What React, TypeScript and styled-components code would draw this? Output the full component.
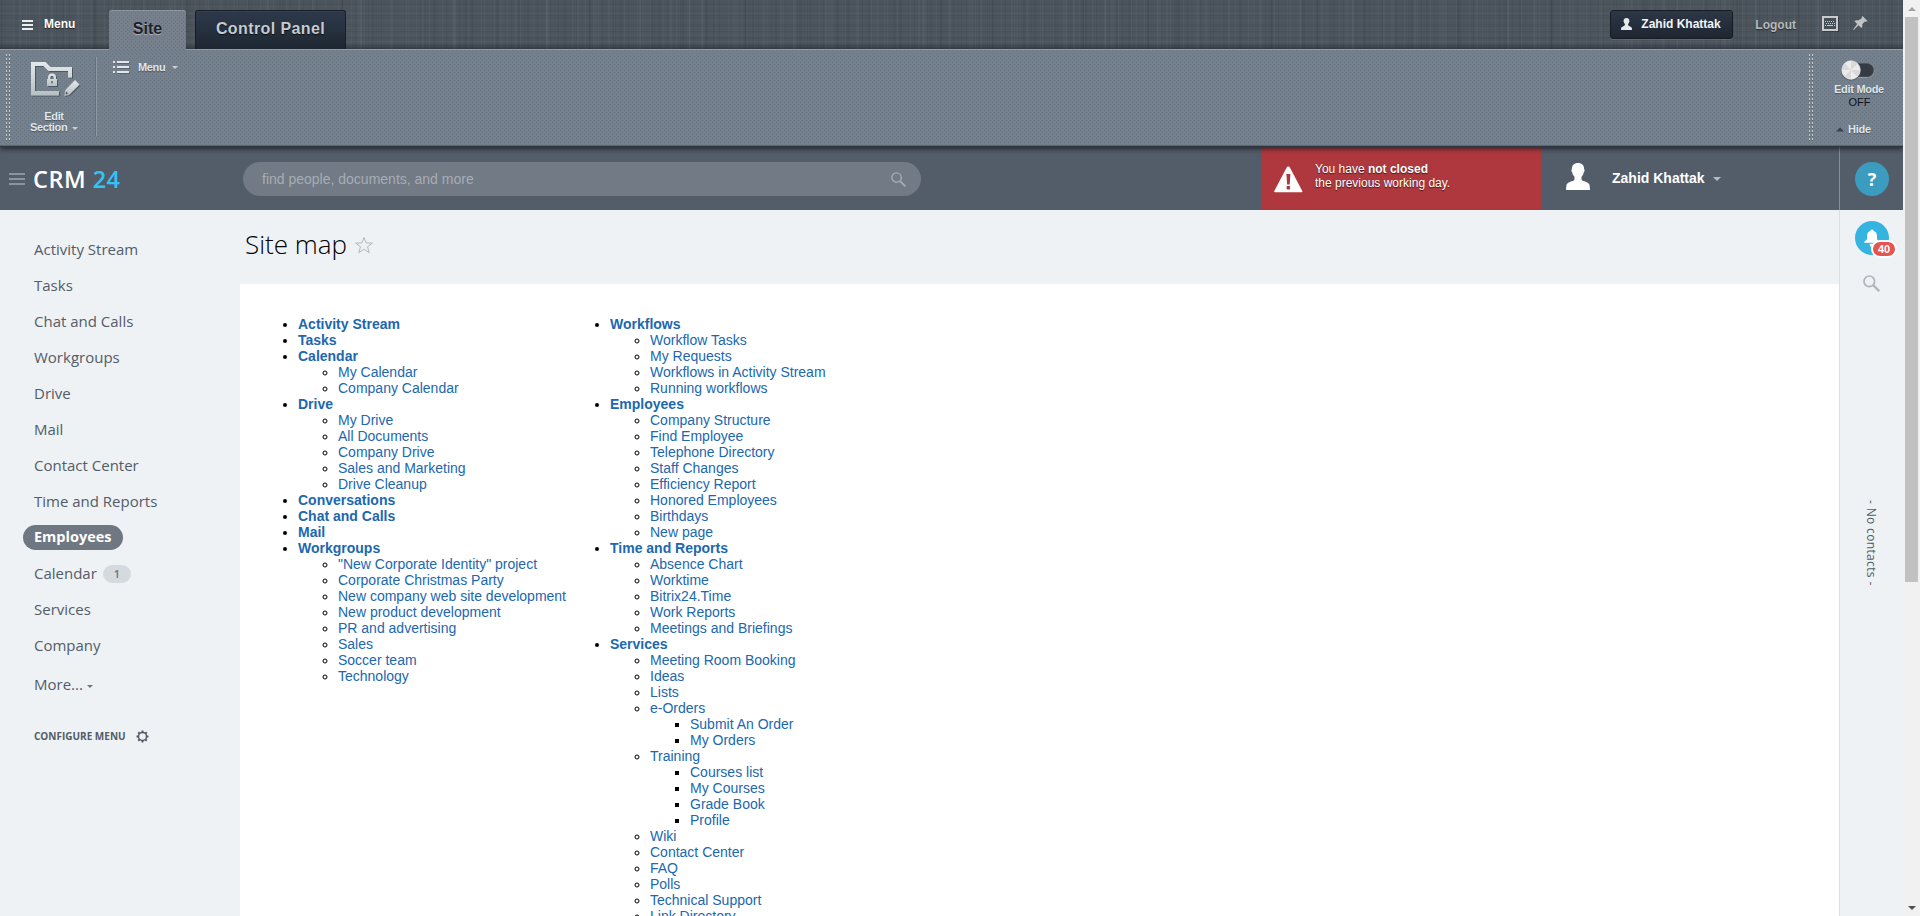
import React from "react";
import styled, { createGlobalStyle, css } from "styled-components";

const ARIAL = `"Liberation Sans", Arial, sans-serif`;
const OPEN = `"Open Sans", sans-serif`;

const GlobalStyle = createGlobalStyle`
  * { box-sizing: border-box; }
  html, body { margin: 0; padding: 0; height: 916px; overflow: hidden; background: #eef2f4; }
  body { font-family: ${ARIAL}; }
  a { text-decoration: none; color: inherit; }
  svg { display: block; flex: none; }
`;

const Page = styled.div`
  display: flex;
  width: 1920px;
  height: 916px;
  overflow: hidden;
`;

const Site = styled.div`
  width: 1903px;
  height: 916px;
  display: flex;
  flex-direction: column;
  overflow: hidden;
`;

/* ---------- admin panel ---------- */

const AdminTop = styled.div`
  height: 49px;
  flex: none;
  display: flex;
  align-items: flex-start;
  background-color: #4c545d;
  background-image:
    linear-gradient(to bottom, transparent 43px, rgba(30, 35, 42, 0.4) 49px),
    repeating-linear-gradient(90deg, rgba(255, 255, 255, 0.03) 0 1px, transparent 1px 4px, rgba(0, 0, 0, 0.05) 4px 5px, transparent 5px 13px),
    repeating-linear-gradient(90deg, rgba(0, 0, 0, 0.05) 0 2px, transparent 2px 19px, rgba(255, 255, 255, 0.03) 19px 21px, transparent 21px 31px),
    repeating-linear-gradient(90deg, rgba(0, 0, 0, 0.04) 0 3px, transparent 3px 29px, rgba(255, 255, 255, 0.02) 29px 33px, transparent 33px 47px),
    repeating-linear-gradient(0deg, rgba(255, 255, 255, 0.025) 0 1px, transparent 1px 3px, rgba(0, 0, 0, 0.05) 3px 4px, transparent 4px 7px),
    repeating-linear-gradient(0deg, rgba(0, 0, 0, 0.05) 0 1px, transparent 1px 11px);
`;

const StartMenu = styled.a`
  width: 109px;
  padding: 17px 0 0 22px;
  display: flex;
  align-items: flex-start;
  color: #fff;
  font: bold 12px/14px ${ARIAL};
  text-shadow: 0 1px 1px rgba(0, 0, 0, 0.6);
  svg { margin: 3px 11px 0 0; }
`;

const dots = css`
  background-color: #76808d;
  background-image:
    radial-gradient(circle at 0.5px 0.5px, rgba(92, 106, 120, 0.55) 0.7px, transparent 0.9px),
    radial-gradient(circle at 2.5px 2.5px, rgba(92, 106, 120, 0.55) 0.7px, transparent 0.9px);
  background-size: 4px 4px;
`;

const Tab = styled.a<{ $active?: boolean }>`
  height: ${(p) => (p.$active ? 40 : 39)}px;
  width: ${(p) => (p.$active ? 77 : 151)}px;
  margin: 10px ${(p) => (p.$active ? 9 : 0)}px 0 0;
  text-align: center;
  font: bold 16px/35px ${ARIAL};
  border-radius: 3px 3px 0 0;
  ${(p) =>
    p.$active
      ? css`
          ${dots}
          position: relative;
          z-index: 3;
          color: #1c2026;
          border-top: 1px solid #8d97a3;
          text-shadow: 0 1px 1px rgba(255, 255, 255, 0.45);
        `
      : css`
          color: #c5cbd2;
          letter-spacing: 0.4px;
          background: linear-gradient(#2d394a, #1f2833);
          border: 1px solid #171d25;
          border-bottom: 0;
          box-shadow: inset 0 1px 0 #35424f;
          text-shadow: 0 1px 1px rgba(0, 0, 0, 0.7);
        `}
`;

const Spacer = styled.div`
  flex: 1;
`;

const UserButton = styled.a`
  width: 123px;
  height: 29px;
  margin-top: 10px;
  padding: 0 0 2px 10px;
  display: flex;
  align-items: center;
  gap: 9px;
  border: 1px solid #171c24;
  border-radius: 3px;
  background: linear-gradient(#2c3747, #1e2631);
  box-shadow: 0 1px 0 rgba(255, 255, 255, 0.12);
  color: #f2f5f7;
  font: bold 12px/14px ${ARIAL};
  white-space: nowrap;
`;

const Logout = styled.a`
  margin: 18px 26px 0 22px;
  color: #b5babf;
  font: bold 12px/14px ${ARIAL};
  text-shadow: 0 1px 1px rgba(0, 0, 0, 0.5);
`;

const TopIcons = styled.div`
  display: flex;
  gap: 14px;
  padding-top: 15px;
  width: 81px;
`;

const AdminPanel = styled.div`
  height: 98px;
  flex: none;
  position: relative;
  z-index: 2;
  display: flex;
  ${dots}
  border-top: 1px solid #939ca7;
  border-bottom: 1px solid #2f3640;
  box-shadow: inset 0 -1px 0 #5d6874, 0 2px 5px rgba(20, 25, 32, 0.75);
`;

const Grip = styled.div<{ $left?: number }>`
  width: 4px;
  height: 88px;
  margin: 4px 0 0 ${(p) => p.$left ?? 0}px;
  background:
    linear-gradient(90deg, transparent 1px, #76808d 1px 3px, transparent 3px),
    repeating-linear-gradient(#c3cbd1 0 2px, #5a646f 2px 3px, #76808d 3px 4px);
`;

const EditSection = styled.a`
  width: 85px;
  padding: 12px 0 0 21px;
  display: flex;
  flex-direction: column;
  align-items: flex-start;
`;

const SmallLabel = styled.span`
  display: block;
  font: bold 11px/11px ${ARIAL};
  letter-spacing: -0.35px;
  text-shadow: 0 1px 1px rgba(50, 58, 68, 0.6);
  color: #dfe5e9;
`;

const Caret = styled.i<{ $w?: number; $c?: string }>`
  display: inline-block;
  border: ${(p) => p.$w ?? 3}px solid transparent;
  border-top-color: ${(p) => p.$c ?? "#c9d0d5"};
  border-bottom: 0;
  vertical-align: middle;
`;

const EditText = styled(SmallLabel)`
  width: 64px;
  margin: 11px 0 0 -9px;
  text-align: center;
  white-space: nowrap;
  ${Caret} { margin-left: 2px; }
`;

const Divider = styled.div`
  width: 2px;
  height: 79px;
  margin-top: 7px;
  border-left: 1px solid #67717d;
  border-right: 1px solid #8e98a3;
`;

const PanelMenu = styled.a`
  display: flex;
  align-items: center;
  height: 16px;
  margin: 9px 0 0 16px;
  ${SmallLabel} { margin: 0 7px 0 8px; }
`;

const EditMode = styled.div`
  width: 90px;
  padding: 9px 0 0 19px;
  display: flex;
  flex-direction: column;
  align-items: center;
`;

const Toggle = styled.div`
  width: 34px;
  height: 22px;
  margin: 1px 0 1px -20px;
`;

const ModeText = styled(SmallLabel)`
  margin-left: -17px;
  line-height: 13px;
  letter-spacing: -0.3px;
`;

const Off = styled.span`
  margin-left: -16px;
  font: 11px/13px ${ARIAL};
  color: #10131f;
`;

const Hide = styled.a`
  margin: 14px 0 0 -28px;
  display: flex;
  align-items: center;
  gap: 4px;
  ${SmallLabel} { line-height: 13px; letter-spacing: -0.2px; }
`;

/* ---------- header ---------- */

const Header = styled.header`
  height: 63px;
  flex: none;
  display: flex;
  background: #535c69;
`;

const Brand = styled.div`
  width: 243px;
  display: flex;
  align-items: flex-start;
  padding: 15px 0 0 9px;
  font: 600 23.5px/34px ${OPEN};
  letter-spacing: 0.5px;
  color: #fff;
  white-space: pre;
  svg { margin: 11px 8px 0 0; }
  span { color: #2fc6f6; }
`;

const Search = styled.div`
  width: 678px;
  height: 34px;
  margin-top: 15px;
  padding: 0 15px 0 19px;
  border-radius: 17px;
  background: #717a85;
  display: flex;
  align-items: center;
  justify-content: space-between;
  color: #a7adb4;
  font: 14px/34px ${ARIAL};
`;

const Alert = styled.div`
  width: 280px;
  margin-left: 341px;
  padding: 15px 0 0 12px;
  display: flex;
  background: #ae383e;
  color: #fff;
  font: 12px/14px ${ARIAL};
  text-shadow: 0 1px 1px rgba(0, 0, 0, 0.6);
  svg { margin: 4px 12px 0 0; }
`;

const Profile = styled.div`
  width: 297px;
  padding: 0 0 1px 24px;
  display: flex;
  align-items: flex-start;
  color: #fff;
  font: bold 14px/16px ${ARIAL};
  white-space: nowrap;
  > svg { margin: 16px 22px 0 0; }
  > span { margin-top: 23px; }
  ${Caret} { margin: 30px 0 0 8px; }
`;

const HelpCell = styled.div`
  width: 64px;
  border-left: 1px solid #868d97;
  padding: 15px 0 0 15px;
`;

const Round = styled.div<{ $bg: string }>`
  position: relative;
  width: 34px;
  height: 34px;
  border-radius: 50%;
  background: ${(p) => p.$bg};
  color: #fff;
  display: flex;
  align-items: center;
  justify-content: center;
  font: bold 18px/34px ${OPEN};
`;

const Counter = styled.span`
  position: absolute;
  left: 16px;
  top: 19px;
  width: 26px;
  height: 18px;
  border: 2px solid #fff;
  border-radius: 9px;
  background: #e65452;
  font: bold 11px/14px ${ARIAL};
  text-align: center;
`;

/* ---------- body ---------- */

const Body = styled.div`
  flex: 1;
  display: flex;
  min-height: 0;
`;

const Sidebar = styled.nav`
  width: 240px;
  padding: 27px 0 0 23px;
  display: flex;
  flex-direction: column;
  align-items: flex-start;
  background: #eef2f4;
`;

const Item = styled.a<{ $active?: boolean; $top?: number }>`
  height: 25px;
  margin: ${(p) => p.$top ?? 0}px 0 11px;
  padding: 0 11px;
  display: flex;
  align-items: center;
  border-radius: 13px;
  font: ${(p) => (p.$active ? "bold 14.5px" : "15px")} / 25px ${OPEN};
  padding-bottom: ${(p) => (p.$active ? 2 : 0)}px;
  color: ${(p) => (p.$active ? "#fff" : "#535c69")};
  background: ${(p) => (p.$active ? "#6f7783" : "transparent")};
  ${Caret} { margin: 3px 0 0 4px; }
`;

const ItemCount = styled.span`
  width: 28px;
  height: 18px;
  margin-left: 6px;
  border-radius: 9px;
  background: #d5dade;
  font: 600 11px/18px ${OPEN};
  text-align: center;
  color: #6d757f;
`;

const Configure = styled.a`
  margin: 18px 0 0 11px;
  display: flex;
  align-items: center;
  gap: 10px;
  color: #535c69;
  font: bold 10px/20px ${OPEN};
`;

const Main = styled.main`
  width: 1599px;
  display: flex;
  flex-direction: column;
`;

const Title = styled.h1`
  height: 74px;
  flex: none;
  margin: 0;
  padding: 16px 0 0 5px;
  display: flex;
  align-items: flex-start;
  gap: 7px;
  font: 300 26px/36px ${OPEN};
  color: #000;
  svg { margin-top: 10px; }
`;

const Content = styled.section`
  flex: 1;
  background: #fff;
  padding: 32px 0 0 18px;
  display: flex;
  overflow: hidden;
`;

const Column = styled.div<{ $w: number }>`
  width: ${(p) => p.$w}px;
  flex: none;
  font: 14px/16px ${ARIAL};
  color: #000;
  ul { margin: 0; padding-left: 40px; }
  li { color: #000; }
  a { color: #2067b0; }
`;

const Strong = styled.a`
  font-weight: bold;
`;

const Rail = styled.aside`
  width: 64px;
  padding: 11px 0 0 15px;
  border-left: 1px solid #d9dfe2;
  background: #eef2f4;
  display: flex;
  flex-direction: column;
  align-items: flex-start;
  > svg { margin: 20px 0 0 8px; }
`;

const NoContacts = styled.div`
  margin: 208px 0 0 7px;
  writing-mode: vertical-rl;
  font: 12px/18px ${OPEN};
  letter-spacing: 0.35px;
  color: #535c69;
  white-space: nowrap;
`;

/* ---------- scrollbar ---------- */

const Scrollbar = styled.div`
  width: 17px;
  background: #f1f1f1;
  display: flex;
  flex-direction: column;
  align-items: center;
  justify-content: space-between;
  padding-bottom: 6px;
`;

const Thumb = styled.div`
  width: 13px;
  height: 565px;
  margin-top: 6px;
  background: #c1c1c1;
`;

const UpSlot = styled.div`
  height: 11px;
  display: flex;
  justify-content: center;
`;

const Arrow = styled.div<{ $up?: boolean }>`
  border: 4px solid transparent;
  ${(p) =>
    p.$up
      ? "border-bottom-color:#a3a3a3;border-top:0;margin-top:7px;"
      : "border-top-color:#505050;border-bottom:0;"}
`;

/* ---------- icons ---------- */

const Bars = ({ w, gap, color, t = 2 }: { w: number; gap: number; color: string; t?: number }) => (
  <svg width={w} height={gap * 2 + t} fill={color} shapeRendering="crispEdges">
    {[0, 1, 2].map((i) => (
      <rect key={i} width={w} height={t} y={i * gap} />
    ))}
  </svg>
);

const Person = ({ w, h, color }: { w: number; h: number; color: string }) => (
  <svg width={w} height={h} viewBox="0 0 24 27" preserveAspectRatio="none" fill={color}>
    <path d="M12 0c4 0 6.300 2.400 6.100 6.200.8.300.7 2.300-.3 3-.3 2-1 3.200-2.300 4.500v2.200c0 1.200 1 1.700 3 2.400 3.500 1.200 5 2.300 5.200 4.700l.3 4H0l.3-4c.2-2.400 1.700-3.500 5.200-4.700 2-.7 3-1.200 3-2.400v-2.200C7.200 12.400 6.500 11.200 6.200 9.200c-1-.7-1.100-2.700-.3-3C5.700 2.400 8 0 12 0z" />
  </svg>
);

const Magnifier = ({ s, color, t = 2 }: { s: number; color: string; t?: number }) => (
  <svg width={s} height={s} viewBox="0 0 17 17" fill="none" stroke={color} strokeWidth={t}>
    <circle cx="6.300" cy="6.300" r="5.300" />
    <path d="M10 10l6.200 6.200" strokeWidth={t + 0.6} />
  </svg>
);

const Keyboard = () => (
  <svg width="17" height="17" viewBox="0 0 17 17">
    <rect x="1" y="2" width="16" height="15" fill="#30363e" opacity=".7" />
    <rect x="1" y="2" width="14" height="13" fill="#454d57" stroke="#c8cbcd" strokeWidth="2" />
    <g fill="#c8cbcd" shapeRendering="crispEdges">
      {[3, 5, 7, 9, 11].map((x) => (
        <React.Fragment key={x}>
          <rect x={x} y="6" width="1" height="1" />
          <rect x={x + 1} y="8" width="1" height="1" />
        </React.Fragment>
      ))}
      <rect x="3" y="10" width="1" height="1" />
      <rect x="5" y="10" width="6" height="1" />
      <rect x="12" y="10" width="1" height="1" />
    </g>
  </svg>
);

const Pin = () => (
  <svg width="16" height="17" viewBox="0 0 16 17" fill="#c0c4c7">
    <path d="M9.500 1l5 5c-.8.700-1.700.8-2.600.4L9.200 9.300c.5 1.500.2 2.600-.9 3.600L5.500 10.200.8 15 .2 14.500 4.200 8.900 1.500 6.300c1-1.100 2.300-1.300 3.700-.7L8.800 3.300C8.500 2.400 8.700 1.600 9.500 1z" />
  </svg>
);

const FolderLock = () => (
  <svg width="52" height="38" viewBox="0 0 52 38">
    <defs>
      <linearGradient id="metal" x1="0" y1="0" x2="0" y2="1">
        <stop offset="0" stopColor="#e3e9eb" />
        <stop offset="1" stopColor="#b6bfc1" />
      </linearGradient>
      <filter id="drop" x="-10%" y="-10%" width="130%" height="130%">
        <feDropShadow dx="1" dy="1" stdDeviation=".5" floodColor="#3d4650" floodOpacity=".7" />
      </filter>
    </defs>
    <g fill="url(#metal)" filter="url(#drop)">
      <path d="M0 0H14.500L19.500 5H41V15.500H37V9H17.500L12.500 4H4V29H28V33.500H0Z" />
      <path d="M17 17v-1.500a4 4 0 0 1 8 0V17h1v7H16v-7zM19.300 17h3.400v-1.600a1.700 1.700 0 0 0-3.400 0zM20.200 19v2.500h1.600V19z" fillRule="evenodd" />
      <path d="M44 18l4.500 4.500L38 33l-4.700.8 1-5.800zM35.200 29.200l-.6 2.800.9.500 2.300-.6z" fillRule="evenodd" />
    </g>
  </svg>
);

const ListIcon = () => (
  <svg width="17" height="14" fill="#e1e7ea" shapeRendering="crispEdges">
    {[1, 6, 11].map((y) => (
      <React.Fragment key={y}>
        <rect x="1" y={y + 1} width="16" height="2" fill="#5a6570" />
        <rect x="0" y={y} width="2" height="2" />
        <rect x="2" y={y} width="2" height="3" fill="#76808d" />
        <rect x="4" y={y} width="12" height="2" />
      </React.Fragment>
    ))}
  </svg>
);

const ToggleIcon = () => (
  <svg width="34" height="22" viewBox="0 0 34 22">
    <rect x="4" y="4.500" width="29" height="13" rx="6.500" fill="#343840" stroke="#949ca5" />
    <rect x="4" y="3.500" width="28.500" height="13" rx="6.500" fill="#363a42" stroke="#4b535d" strokeWidth=".6" />
    <circle cx="10" cy="10.800" r="10" fill="#4e565f" opacity=".7" />
    <circle cx="10" cy="10" r="9.200" fill="#d9d9d9" stroke="#f4f4f4" strokeWidth=".7" />
    <path d="M10 10L4 3.200A9 9 0 0 1 10 1zM10 10l6.500-6A9 9 0 0 1 19 10zM10 10l6 6.700A9 9 0 0 1 10 19zM10 10l-6.500 6A9 9 0 0 1 1 10z" fill="#ececec" />
  </svg>
);

const Warning = () => (
  <svg width="29" height="27" viewBox="0 0 29 27">
    <path d="M14.200.5c.8 0 1.400.4 1.800 1.200L28.300 25c.3.700.1 1.200-.7 1.200H1C.2 26.200 0 25.700.3 25L12.500 1.700C12.900.9 13.400.5 14.200.5z" fill="#fff" />
    <path d="M12.400 8h4l-.7 10.500h-2.600z" fill="#ae383e" />
    <rect x="12.600" y="20" width="3.500" height="3.500" rx=".8" fill="#ae383e" />
  </svg>
);

const Bell = () => (
  <svg width="16" height="18" viewBox="0 0 16 18" fill="#fff">
    <path d="M8 .5c.9 0 1.600.6 1.600 1.500C12 2.700 13 4.500 13 7v3.300L15.800 13v.7H.2V13L3 10.300V7c0-2.500 1-4.300 3.400-5C6.400 1.100 7.100.5 8 .5zM5.500 14.800h5L9.800 17.500H6.200z" />
  </svg>
);

const Star = () => (
  <svg width="20" height="18" viewBox="0 0 20 18" fill="none" stroke="#b3b7bb" strokeWidth="1">
    <path d="M10 1.500l2.100 5.400 6.200.2-4.800 3.700 1.700 5.800L10 13.300l-5.200 3.300 1.700-5.800L1.700 7.100l6.200-.2z" />
  </svg>
);

const Gear = () => (
  <svg width="13" height="13" viewBox="0 0 13 13" fill="none" stroke="#535c69">
    <circle cx="6.500" cy="6.500" r="4" strokeWidth="1.500" />
    <g strokeWidth="2">
      {[0, 45, 90, 135, 180, 225, 270, 315].map((a) => (
        <path key={a} d="M6.500 2.200V.5" transform={`rotate(${a} 6.500 6.500)`} />
      ))}
    </g>
  </svg>
);

/* ---------- data ---------- */

type Node = string | [string, Node[]];

const LEFT: Node[] = [
  "Activity Stream",
  "Tasks",
  ["Calendar", ["My Calendar", "Company Calendar"]],
  ["Drive", ["My Drive", "All Documents", "Company Drive", "Sales and Marketing", "Drive Cleanup"]],
  "Conversations",
  "Chat and Calls",
  "Mail",
  [
    "Workgroups",
    [
      '"New Corporate Identity" project',
      "Corporate Christmas Party",
      "New company web site development",
      "New product development",
      "PR and advertising",
      "Sales",
      "Soccer team",
      "Technology",
    ],
  ],
];

const RIGHT: Node[] = [
  ["Workflows", ["Workflow Tasks", "My Requests", "Workflows in Activity Stream", "Running workflows"]],
  [
    "Employees",
    [
      "Company Structure",
      "Find Employee",
      "Telephone Directory",
      "Staff Changes",
      "Efficiency Report",
      "Honored Employees",
      "Birthdays",
      "New page",
    ],
  ],
  ["Time and Reports", ["Absence Chart", "Worktime", "Bitrix24.Time", "Work Reports", "Meetings and Briefings"]],
  [
    "Services",
    [
      "Meeting Room Booking",
      "Ideas",
      "Lists",
      ["e-Orders", ["Submit An Order", "My Orders"]],
      ["Training", ["Courses list", "My Courses", "Grade Book", "Profile"]],
      "Wiki",
      "Contact Center",
      "FAQ",
      "Polls",
      "Technical Support",
      "Link Directory",
    ],
  ],
];

const Tree = ({ nodes, top }: { nodes: Node[]; top?: boolean }) => (
  <ul>
    {nodes.map((n) => {
      const [label, kids] = typeof n === "string" ? [n, null] : n;
      return (
        <li key={label}>
          {top ? <Strong>{label}</Strong> : <a>{label}</a>}
          {kids && <Tree nodes={kids} />}
        </li>
      );
    })}
  </ul>
);

const MENU = [
  "Activity Stream",
  "Tasks",
  "Chat and Calls",
  "Workgroups",
  "Drive",
  "Mail",
  "Contact Center",
  "Time and Reports",
  "Employees",
  "Calendar",
  "Services",
  "Company",
];

export default function App() {
  return (
    <Page>
      <GlobalStyle />
      <Site>
        <AdminTop>
          <StartMenu>
            <Bars w={11} gap={4} color="#eceff1" />
            Menu
          </StartMenu>
          <Tab $active>Site</Tab>
          <Tab>Control Panel</Tab>
          <Spacer />
          <UserButton>
            <Person w={11} h={12} color="#e6eaed" />
            Zahid Khattak
          </UserButton>
          <Logout>Logout</Logout>
          <TopIcons>
            <Keyboard />
            <Pin />
          </TopIcons>
        </AdminTop>
        <AdminPanel>
          <Grip $left={6} />
          <EditSection>
            <FolderLock />
            <EditText>
              Edit
              <br />
              Section <Caret />
            </EditText>
          </EditSection>
          <Divider />
          <PanelMenu>
            <ListIcon />
            <SmallLabel>Menu</SmallLabel>
            <Caret />
          </PanelMenu>
          <Spacer />
          <Grip />
          <EditMode>
            <Toggle>
              <ToggleIcon />
            </Toggle>
            <ModeText>Edit Mode</ModeText>
            <Off>OFF</Off>
            <Hide>
              <svg width="8" height="5">
                <path d="M0 4.500L4 .5l4 4z" fill="#39414b" />
              </svg>
              <SmallLabel>Hide</SmallLabel>
            </Hide>
          </EditMode>
        </AdminPanel>
        <Header>
          <Brand>
            <Bars w={16} gap={5} color="#8c939c" />
            CRM <span>24</span>
          </Brand>
          <Search>
            find people, documents, and more
            <Magnifier s={15} color="#a3aab2" t={1.6} />
          </Search>
          <Alert>
            <Warning />
            <div>
              You have <b>not closed</b>
              <br />
              the previous working day.
            </div>
          </Alert>
          <Profile>
            <Person w={24} h={27} color="#fff" />
            <span>Zahid Khattak</span>
            <Caret $w={4} $c="#b5bac0" />
          </Profile>
          <HelpCell>
            <Round $bg="#3b9cbf">?</Round>
          </HelpCell>
        </Header>
        <Body>
          <Sidebar>
            {MENU.map((m) => (
              <Item key={m} $active={m === "Employees"}>
                {m}
                {m === "Calendar" && <ItemCount>1</ItemCount>}
              </Item>
            ))}
            <Item $top={3}>
              More... <Caret $w={3} $c="#6d757f" />
            </Item>
            <Configure>
              CONFIGURE MENU
              <Gear />
            </Configure>
          </Sidebar>
          <Main>
            <Title>
              Site map
              <Star />
            </Title>
            <Content>
              <Column $w={312}>
                <Tree nodes={LEFT} top />
              </Column>
              <Column $w={400}>
                <Tree nodes={RIGHT} top />
              </Column>
            </Content>
          </Main>
          <Rail>
            <Round $bg="#35b4e0">
              <Bell />
              <Counter>40</Counter>
            </Round>
            <Magnifier s={17} color="#aeb5bc" t={1.7} />
            <NoContacts>- No contacts -</NoContacts>
          </Rail>
        </Body>
      </Site>
      <Scrollbar>
        <div>
          <UpSlot>
            <Arrow $up />
          </UpSlot>
          <Thumb />
        </div>
        <Arrow />
      </Scrollbar>
    </Page>
  );
}
